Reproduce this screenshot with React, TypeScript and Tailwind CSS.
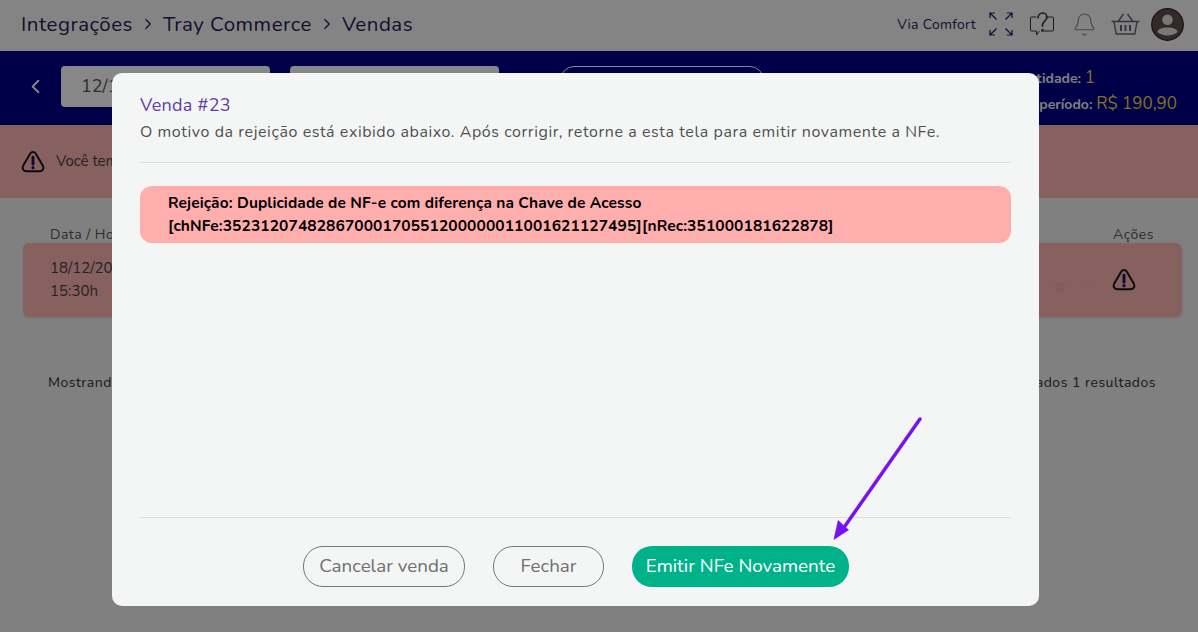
import { Bell, ChevronLeft, ChevronRight } from "lucide-react";

function WarningIcon({ className }: { className?: string }) {
  return (
    <svg className={className} viewBox="0 0 24 24" fill="none" aria-hidden="true">
      <path d="M9.500 4.200c1.200-2 3.800-2 5 0l6.500 11c1.500 2.800-.2 5.300-3 5.300H6c-2.800 0-4.500-2.500-3-5.300z" stroke="#161616" strokeWidth="1.800" strokeLinejoin="round" />
      <path d="M12 7.500v6.500" stroke="#15125a" strokeWidth="2.600" strokeLinecap="round" />
      <circle cx="12" cy="17.200" r="1.400" fill="#15125a" />
    </svg>
  );
}

function ExpandIcon() {
  return (
    <svg className="h-[24px] w-[24px] text-[#2a0f70]" viewBox="0 0 24 24" fill="none" stroke="currentColor" strokeWidth="1.200" aria-hidden="true">
      <path d="M1 6V1h5M1 1l6.500 6.500M18 1h5v5M23 1l-6.500 6.500M1 18v5h5M1 23l6.500-6.500M23 18v5h-5M23 23l-6.500-6.500" />
    </svg>
  );
}

function HelpIcon() {
  return (
    <svg className="h-[24px] w-[24px] text-[#3a3040]" viewBox="0 0 24 24" fill="none" stroke="currentColor" aria-hidden="true">
      <path d="M6.500 5H1.500a1 1 0 0 0-1 1v12a1 1 0 0 0 1 1h5v4l3-4M15.500 5h7a1 1 0 0 1 1 1v12a1 1 0 0 1-1 1H11" strokeWidth="1" />
      <path d="M8 6.500C8 3 10 1 12.500 1s4.500 1.800 4.500 4.300c0 3.500-4.500 4-4.500 7.500v2" strokeWidth="1.600" />
      <circle cx="12.500" cy="18" r="1.200" fill="currentColor" stroke="none" />
    </svg>
  );
}

function BasketIcon() {
  return (
    <svg className="h-[22px] w-[29px] text-[#62626e]" viewBox="0 0 29 22" fill="none" stroke="currentColor" strokeWidth="1.400" aria-hidden="true">
      <path d="M0.500 8.500h28M3 8.500l2.200 12.500h18.600L26 8.500M7 8.500 12.500 1M22 8.500 16.500 1" />
      <path d="M10 12v6M14.500 12v6M19 12v6" strokeWidth="2" />
    </svg>
  );
}

function Avatar() {
  return (
    <svg className="h-[33px] w-[33px]" viewBox="0 0 33 33" aria-hidden="true">
      <circle cx="16.500" cy="16.500" r="15.800" fill="#5f4f4f" stroke="#2c2424" strokeWidth="1.200" />
      <circle cx="16.500" cy="11.800" r="5.300" fill="#e3e3e3" />
      <path d="M6.500 24c0-3 4.500-4.500 10-4.500s10 1.500 10 4.500c-2.500 2-6 3.500-10 3.500s-7.500-1.500-10-3.500z" fill="#e3e3e3" />
    </svg>
  );
}

export default function App() {
  return (
    <div className="relative flex h-[632px] w-[1198px] flex-col overflow-hidden bg-[#f2f2f2] font-['Nunito','Lato',sans-serif] text-[#333]">
      {/* header */}
      <header className="flex h-[51px] shrink-0 items-center justify-between bg-[#fafafa] pb-[3px] pl-[21px] pr-[14px]">
        <nav className="flex items-center text-[20.500px] tracking-[0.500px] text-[#2a1a58]">
          <span>Integrações</span>
          <ChevronRight className="mx-[6px] h-[18px] w-[18px]" strokeWidth={1.6} />
          <span>Tray Commerce</span>
          <ChevronRight className="mx-[6px] h-[18px] w-[18px]" strokeWidth={1.6} />
          <span>Vendas</span>
        </nav>
        <div className="flex items-center">
          <span className="mr-[13px] text-[14px] tracking-[0.3px] text-[#2a1a58]">Via Comfort</span>
          <ExpandIcon />
          <span className="ml-[17px]"><HelpIcon /></span>
          <Bell className="ml-[18px] h-[25px] w-[25px] text-[#888]" strokeWidth={1} />
          <span className="ml-[14px]"><BasketIcon /></span>
          <span className="ml-[11px]"><Avatar /></span>
        </div>
      </header>

      {/* filters */}
      <div className="flex h-[74px] shrink-0 items-start bg-[#00008a] pl-[24px] pr-[21px] pt-[15px]">
        <ChevronLeft className="mt-[9px] h-[23px] w-[23px] text-white" strokeWidth={2} />
        <div className="ml-[14px] flex h-[41px] w-[209px] items-center rounded-[4px] bg-white pl-[20px] text-[18px] text-[#555]">12/12/2023</div>
        <div className="ml-[20px] h-[41px] w-[209px] rounded-[4px] bg-white" />
        <div className="ml-[61px] h-[41px] w-[204px] rounded-[14px] border border-white" />
        <div className="ml-auto text-right text-[14px] font-bold leading-[25px] text-[#f0f0f0]">
          <p className="-mt-[1px] pr-[82px]">Quantidade: <span className="text-[17px] font-normal text-[#f5d442]">1</span></p>
          <p>Total do período: <span className="text-[17px] font-normal text-[#f5d442]">R$ 190,90</span></p>
        </div>
      </div>

      {/* alert */}
      <div className="flex h-[73px] shrink-0 items-center bg-[#ffb5b5] pl-[20px] text-[15px] text-[#444]">
        <WarningIcon className="h-[26px] w-[26px]" />
        <span className="ml-[10px]">Você tem vendas com rejeição</span>
      </div>

      {/* table */}
      <main className="flex flex-col pl-[23px] pr-[16px] pt-[26px] text-[14px]">
        <div className="flex justify-between pl-[27px] pr-[28px] tracking-[0.5px] text-[#555]">
          <span>Data / Hora</span>
          <span>Ações</span>
        </div>
        <div className="-mt-[2px] flex h-[74px] items-center rounded-[6px] bg-[#ffb5b5] pl-[27px] pr-[45px] shadow-sm">
          <div className="text-[15px] leading-[23px] text-[#444]">
            <p>18/12/2023</p>
            <p>15:30h</p>
          </div>
          <span className="ml-auto mt-[14px] h-[12px] w-[10px] rounded-full bg-[#fbafaf]" />
          <span className="ml-[19px] mt-[14px] h-[10px] w-[8px] rounded-full bg-[#fdb3b3]" />
          <WarningIcon className="ml-[19px] h-[26px] w-[26px]" />
        </div>
        <div className="mt-[55px] flex justify-between pl-[25px] pr-[26px] tracking-[0.5px] text-[#333]">
          <span>Mostrando</span>
          <span>Encontrados 1 resultados</span>
        </div>
      </main>

      {/* overlay */}
      <div className="absolute inset-0 bg-black/[.47]" />

      {/* modal */}
      <div className="absolute left-[112px] top-[73px] flex h-[533px] w-[927px] flex-col rounded-[10px] bg-[#f4f6f5] px-[28px]">
        <h2 className="mt-[20px] text-[18px] leading-[24px] tracking-[0.3px] text-[#5f3dab]">Venda #23</h2>
        <p className="mt-[3px] text-[16px] leading-[24px] tracking-[0.58px] text-[#505050]">
          O motivo da rejeição está exibido abaixo. Após corrigir, retorne a esta tela para emitir novamente a NFe.
        </p>
        <div className="mt-[18px] h-px bg-[#dcdddc]" />
        <div className="mt-[23px] h-[57px] rounded-[12px] bg-[#ffaeae] pl-[28px] pt-[5px] text-[15.500px] font-bold leading-[23px] tracking-[0.1px] text-black">
          <p>Rejeição: Duplicidade de NF-e com diferença na Chave de Acesso</p>
          <p>[chNFe:35231207482867000170551200000011001621127495][nRec:351000181622878]</p>
        </div>
        <div className="mt-auto h-px bg-[#dcdddc]" />
        <div className="mb-[19px] mt-[28px] flex justify-center gap-[28px] pl-[1px] text-[18.800px]">
          <button className="h-[41px] w-[162px] rounded-[20px] border border-[#777] text-[#6f6f6f]">Cancelar venda</button>
          <button className="h-[41px] w-[111px] rounded-[20px] border border-[#777] text-[#6f6f6f]">Fechar</button>
          <button className="h-[41px] w-[217px] rounded-[20px] bg-[#00b28a] text-white">Emitir NFe Novamente</button>
        </div>
      </div>

      {/* annotation arrow */}
      <svg className="absolute left-[825px] top-[410px] h-[135px] w-[105px]" viewBox="0 0 105 135" aria-hidden="true">
        <path d="M95 9 20 116" stroke="#7a12f0" strokeWidth="3.500" strokeLinecap="round" fill="none" />
        <path d="M8.500 130 13 110 24 120z" fill="#7a12f0" />
      </svg>
    </div>
  );
}
